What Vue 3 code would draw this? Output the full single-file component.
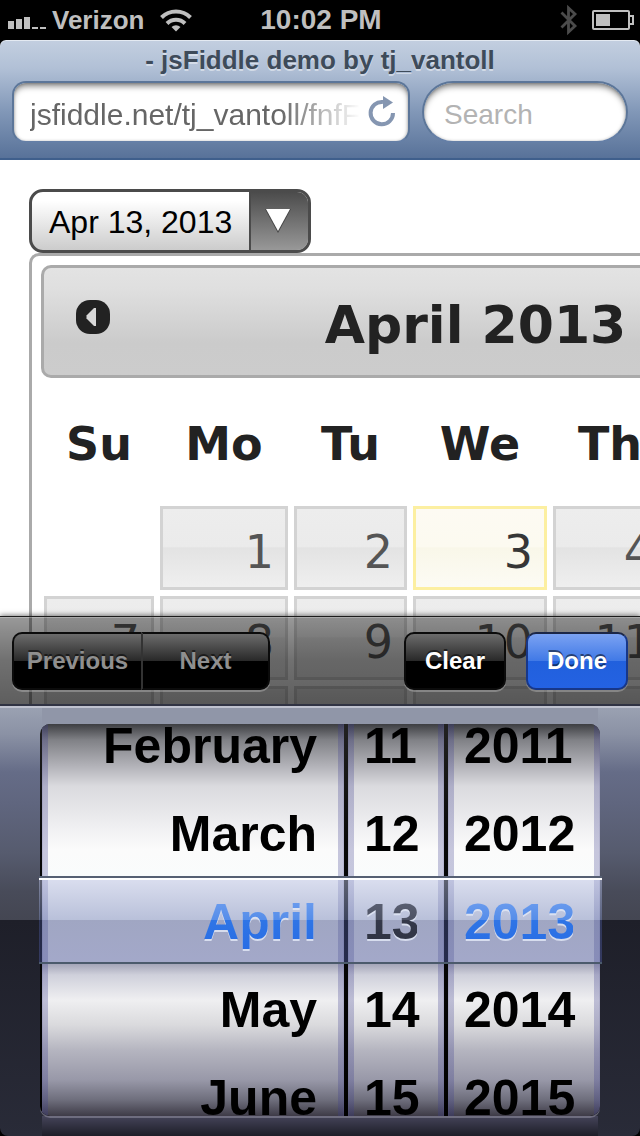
<script setup>
import { ref } from 'vue'

const url = ref('jsfiddle.net/tj_vantoll/fnfF')
const search = ref('')

const weekdays = ['Su', 'Mo', 'Tu', 'We', 'Th', 'Fr', 'Sa']
const weeks = [
  [null, 1, 2, 3, 4, 5, 6],
  [7, 8, 9, 10, 11, 12, 13],
  [14, 15, 16, 17, 18, 19, 20],
]
const today = 3

const wheels = [
  { name: 'month', label: 'Month', selected: 'April', items: ['February', 'March', 'April', 'May', 'June'] },
  { name: 'day', label: 'Day', selected: '13', items: ['11', '12', '13', '14', '15'] },
  { name: 'year', label: 'Year', selected: '2013', items: ['2011', '2012', '2013', '2014', '2015'] },
]
</script>

<template>
  <div class="phone">
    <header class="status">
      <div class="carrier">
        <svg class="signal" width="38" height="16" viewBox="0 0 38 16" aria-hidden="true">
          <path d="M0 5h6v8H0zM8 3h6v10H8zM16 1h6v12h-6zM24 11h6v2h-6zM32 11h6v2h-6z" fill="#bfbfbf" />
        </svg>
        <span>Verizon</span>
        <svg class="wifi" width="32" height="24" viewBox="0 0 32 24" aria-hidden="true">
          <g fill="none" stroke="#bfbfbf" stroke-width="4">
            <path d="M1.500 9.500a20.500 20.500 0 0 1 29 0" />
            <path d="M7 15.500a12.800 12.800 0 0 1 18 0" />
          </g>
          <path d="M16 23.500l-4.500-4.500a6.500 6.500 0 0 1 9 0z" fill="#bfbfbf" />
        </svg>
      </div>
      <span class="clock">10:02 PM</span>
      <div class="indicators">
        <svg width="18" height="32" viewBox="0 0 18 32" aria-hidden="true">
          <path d="M1.500 8.500L15 22l-6.500 6V4L15 10 1.500 23.500" fill="none" stroke="#4b4b4b" stroke-width="2.800" />
        </svg>
        <svg width="42" height="20" viewBox="0 0 42 20" aria-hidden="true">
          <rect x="1" y="1" width="36" height="18" rx="1" fill="none" stroke="#bfbfbf" stroke-width="2" />
          <path d="M4 4h14v12H4z" fill="#bfbfbf" />
          <path d="M37 6h4v8h-4" fill="none" stroke="#bfbfbf" stroke-width="2" />
        </svg>
      </div>
    </header>

    <div class="browser">
      <h1 class="page-title">- jsFiddle demo by tj_vantoll</h1>
      <div class="fields">
        <div class="field address">
          <input v-model="url" type="text" aria-label="Address" />
          <button type="button" class="reload" aria-label="Reload">
            <svg width="28" height="32" viewBox="0 0 28 32" aria-hidden="true">
              <path d="M15 6a11.200 11.200 0 1 0 10 11" fill="none" stroke="#8596b1" stroke-width="4" />
              <path d="M15 0v13l10-6.500z" fill="#8596b1" />
            </svg>
          </button>
        </div>
        <div class="field search">
          <input v-model="search" type="text" placeholder="Search" aria-label="Search" />
        </div>
      </div>
    </div>

    <main class="content">
      <button type="button" class="date-button">
        <span class="date-text">Apr 13, 2013</span>
        <span class="date-arrow">
          <svg width="26" height="24" viewBox="0 0 26 24" aria-hidden="true">
            <path d="M0 0h26L13 24z" fill="#444" />
            <path d="M1 0h24L13 22z" fill="#fff" />
          </svg>
        </span>
      </button>

      <section class="calendar" aria-label="Calendar">
        <div class="calendar-head">
          <button type="button" class="prev" aria-label="Previous month">
            <svg width="36" height="36" viewBox="0 0 36 36" aria-hidden="true">
              <rect x="1" y="1" width="34" height="34" rx="14" fill="#222" />
              <path d="M21 9v18h-2L11.500 19.500v-3L19 9z" fill="#d8d8d8" />
            </svg>
          </button>
          <h2>April 2013</h2>
        </div>
        <table>
          <colgroup>
            <col v-for="d in weekdays" :key="d" :class="'col-' + d.toLowerCase()" />
          </colgroup>
          <thead>
            <tr>
              <th v-for="d in weekdays" :key="d" scope="col">{{ d }}</th>
            </tr>
          </thead>
          <tbody>
            <tr v-for="(week, w) in weeks" :key="w">
              <td v-for="(day, i) in week" :key="i">
                <a v-if="day" href="#" :class="{ today: day === today }">{{ day }}</a>
              </td>
            </tr>
          </tbody>
        </table>
      </section>
    </main>

    <div class="sheet">
      <div class="toolbar">
        <div class="segmented">
          <button type="button" class="key" disabled>Previous</button>
          <button type="button" class="key" disabled>Next</button>
        </div>
        <button type="button" class="key clear">Clear</button>
        <button type="button" class="key done">Done</button>
      </div>
      <div class="picker-back">
        <div class="picker">
          <div class="well">
            <div class="frame">
              <div v-for="wheel in wheels" :key="wheel.name" class="wheel" :class="wheel.name">
                <ul role="listbox" :aria-label="wheel.label">
                  <li
                    v-for="item in wheel.items"
                    :key="item"
                    role="option"
                    :aria-selected="item === wheel.selected"
                  >{{ item }}</li>
                </ul>
              </div>
            </div>
            <div class="selection"></div>
          </div>
        </div>
      </div>
    </div>
  </div>
</template>

<style>
body {
  margin: 0;
  background: #fff;
}
</style>

<style scoped>
.phone {
  position: relative;
  display: flex;
  flex-direction: column;
  height: 100vh;
  overflow: hidden;
  background: #fff;
  font-family: "Liberation Sans", Arial, sans-serif;
}

button,
input {
  margin: 0;
  padding: 0;
  border: 0;
  background: none;
  font: inherit;
  color: inherit;
}

/* Status bar */
.status {
  flex: none;
  display: grid;
  grid-template-columns: 1fr auto 1fr;
  align-items: center;
  height: 40px;
  padding: 0 6px 0 8px;
  background: #000;
  color: #bfbfbf;
  font-size: 26px;
  font-weight: bold;
}
.carrier {
  display: flex;
  align-items: center;
  gap: 6px;
}
.signal {
  margin-top: 8px;
}
.wifi {
  margin-left: 10px;
}
.clock {
  font-size: 28px;
}
.indicators {
  display: flex;
  align-items: center;
  justify-content: flex-end;
  gap: 14px;
}

/* Browser chrome */
.browser {
  flex: none;
  height: 120px;
  box-sizing: border-box;
  border-bottom: 2px solid #3f5f8c;
  background: linear-gradient(#c3cfe0, #b1c0d6 24%, #8298b8 60%, #587299);
  box-shadow: inset 0 1px 0 #e4eaf2;
  border-radius: 6px 6px 0 0;
  outline: 6px solid #000;
  outline-offset: 0;
  clip-path: inset(0);
}
.page-title {
  margin: 0;
  font-size: 26px;
  line-height: 41px;
  text-align: center;
  color: #3e4b5a;
  text-shadow: 0 2px 0 rgba(255, 255, 255, 0.45);
}
.fields {
  display: flex;
  gap: 12px;
  padding: 0 12px;
}
.field {
  display: flex;
  align-items: center;
  box-sizing: border-box;
  height: 62px;
  border: 2px solid #5c7699;
  border-bottom-color: #657fa6;
  background: #fff;
  box-shadow: inset 0 5px 6px -2px rgba(0, 0, 0, 0.5), inset 0 0 3px rgba(0, 0, 0, 0.25);
}
.address {
  flex: 1;
  min-width: 0;
  gap: 8px;
  padding: 0 12px 0 16px;
  border-radius: 14px;
}
.field input {
  flex: 1;
  min-width: 0;
  height: 48px;
  padding-top: 5px;
  box-sizing: border-box;
  outline: 0;
}
.address input {
  font-size: 30px;
  color: #666;
  mask-image: linear-gradient(90deg, #000 calc(100% - 80px), transparent);
}
.reload {
  display: flex;
}
.search {
  flex: 0 1 206px;
  min-width: 0;
  padding: 0 20px;
  border-radius: 31px;
}
.search input {
  font-size: 28px;
}
.search input::placeholder {
  color: #b3b3b3;
  opacity: 1;
}

/* Web page */
.content {
  flex: 1;
  min-height: 0;
  padding: 29px 29px 0;
}
.date-button {
  display: flex;
  height: 64px;
  box-sizing: border-box;
  border: 3px solid #4b4b4b;
  border-radius: 14px;
  overflow: hidden;
  background: linear-gradient(#fff, #fff 15%, #ccc);
  font-size: 32px;
  line-height: 60px;
  color: #000;
}
.date-text {
  padding: 0 17px;
}
.date-arrow {
  display: flex;
  align-items: center;
  box-sizing: border-box;
  width: 59px;
  padding-left: 14px;
  border-left: 2px solid #4b4b4b;
  background: linear-gradient(#4b4b4b, #989898);
}
.calendar {
  width: 869px;
  padding: 9px;
  border: 3px solid #aaa;
  border-radius: 10px;
  font-family: "DejaVu Sans", Verdana, sans-serif;
  color: #222;
}
.calendar-head {
  position: relative;
  box-sizing: border-box;
  height: 113px;
  padding-top: 8px;
  border: 3px solid #aaa;
  border-radius: 10px;
  background: linear-gradient(#e3e3e3, #dfdfdf 20%, #cbcbcb 70%, #ccc);
}
.calendar-head h2 {
  margin: 0;
  font-size: 52px;
  line-height: 99px;
  text-align: center;
}
.prev {
  position: absolute;
  top: 31px;
  left: 31px;
  display: flex;
}
table {
  width: 100%;
  table-layout: fixed;
  border-collapse: collapse;
  font-size: 46px;
}
.col-su { width: 116px; }
.col-mo { width: 134px; }
.col-tu { width: 119px; }
.col-we { width: 140px; }
.col-th { width: 120px; }
.col-fr { width: 110px; }
.col-sa { width: 130px; }
th {
  padding: 6px 0 0;
  height: 119px;
  line-height: 60px;
}
td {
  padding: 3px;
}
td a {
  display: block;
  padding: 8px 11px 0 0;
  border: 3px solid #d3d3d3;
  background: linear-gradient(#ededed, #ebebeb 48%, #e3e3e3 50%, #efefef);
  line-height: 70px;
  text-align: right;
  text-decoration: none;
  color: #555;
}
td a.today {
  border-color: #fcefa1;
  background: linear-gradient(#fdfaf3, #fcfaf0 48%, #f9f7e9 50%, #fcfbf4);
  color: #363636;
}

/* Input sheet lying over the page */
.sheet {
  position: absolute;
  right: 0;
  bottom: 0;
  left: 0;
}
.toolbar {
  display: flex;
  align-items: center;
  gap: 20px;
  box-sizing: border-box;
  height: 90px;
  padding: 0 12px;
  border-top: 1px solid #1c1c1c;
  border-bottom: 2px solid #303343;
  background: linear-gradient(rgba(0, 0, 0, 0.4), rgba(0, 0, 0, 0.56) 50%, rgba(0, 0, 0, 0.63));
  box-shadow: 0 -1px 5px rgba(0, 0, 0, 0.5), inset 0 1px 0 rgba(255, 255, 255, 0.25);
}
.segmented {
  display: flex;
  margin-right: auto;
}
.key {
  box-sizing: border-box;
  width: 102px;
  height: 58px;
  border: 2px solid #0b0b0b;
  border-radius: 10px;
  background: linear-gradient(#6c6c6c, #282828 50%, #000 50%);
  box-shadow: 0 2px 0 rgba(255, 255, 255, 0.25);
  font-size: 24px;
  font-weight: bold;
  color: #fff;
  text-shadow: 0 -2px 0 rgba(0, 0, 0, 0.5);
}
.segmented .key {
  width: 129px;
  color: #8f8f8f;
}
.segmented .key:first-child {
  border-right: 0;
  border-radius: 10px 0 0 10px;
}
.segmented .key:last-child {
  border-left: 2px solid #333;
  border-radius: 0 10px 10px 0;
}
.done {
  border-color: #173789;
  border-top-color: #1c2747;
  background: linear-gradient(#7ba2f2, #4079e6 50%, #2160dd 50%, #2462e2);
}

.picker-back {
  background: #000;
}
.picker {
  padding: 16px 40px 20px;
  border-top: 2px solid #bfc2cf;
  border-radius: 0 0 8px 8px;
  background:
    linear-gradient(#45445a, #1d1e28) bottom center / calc(100% - 84px) 20px no-repeat,
    linear-gradient(#9096a8, #9096a8) top center / calc(100% - 84px) 16px no-repeat,
    linear-gradient(#9aa1b2, #8b92a5 6%, #656c87 15%, #60667f 22%, #565b6e 34%, #484b59 43%, #444652 212px, #1e1f29 212px, #292b38);
}
.well {
  position: relative;
}
.frame {
  display: grid;
  grid-template-columns: minmax(0, 1fr) 96px 152px;
  gap: 4px;
  height: 392px;
  padding-left: 2px;
  border-radius: 10px;
  overflow: hidden;
  background: linear-gradient(#222, #080808 30%, #000);
  box-shadow: 0 2px 0 rgba(140, 138, 155, 0.6);
}
.wheel {
  background:
    linear-gradient(90deg, rgba(80, 80, 140, 0.5), rgba(60, 60, 140, 0.28) 1px, rgba(60, 60, 140, 0.28) 6px, transparent 6px, transparent calc(100% - 6px), rgba(60, 60, 140, 0.28) calc(100% - 6px), rgba(60, 60, 140, 0.28) calc(100% - 1px), rgba(80, 80, 140, 0.5)),
    linear-gradient(#3d3e42, #808186 16px, #b6b6bc 44px, #dadade 62px, #f1f1f3 106px, #fbfbfb 126px, #fafcfc 152px, #fff 154px, #fff 238px, #a4a5b8 240px, #cfd0db 251px, #efeff1 276px, #dadadd 301px, #b5b5c0 326px, #9898a8 356px, #6e6e7c 376px, #3e3b47 392px);
}
.wheel ul {
  position: relative;
  z-index: 2;
  margin: -22px 0 0;
  padding: 0 27px 0 16px;
  list-style: none;
  font-size: 50px;
  font-weight: bold;
  line-height: 88px;
  color: #000;
}
.wheel li {
  height: 88px;
  white-space: nowrap;
}
.month li {
  text-align: right;
}
.wheel li[aria-selected="true"] {
  color: transparent;
  background: linear-gradient(#86aef4, #558de9 42px, #2f75e6 42px, #2568e4);
  background-clip: text;
  filter: drop-shadow(0 2px 0 rgba(225, 230, 245, 0.85));
}
.day li[aria-selected="true"] {
  background-image: linear-gradient(#6b7184, #4d5264 42px, #343849 42px, #2b2f40);
}
.selection {
  position: absolute;
  z-index: 1;
  top: 152px;
  right: -2px;
  left: -1px;
  box-sizing: border-box;
  height: 88px;
  border-top: 2px solid #566073;
  border-bottom: 2px solid #4b5a6c;
  background: linear-gradient(#fff 2px, rgba(180, 188, 222, 0.5) 2px, rgba(115, 130, 180, 0.5) 42px, rgba(66, 78, 135, 0.5) 42px, rgba(72, 82, 148, 0.5)) padding-box;
}
</style>
